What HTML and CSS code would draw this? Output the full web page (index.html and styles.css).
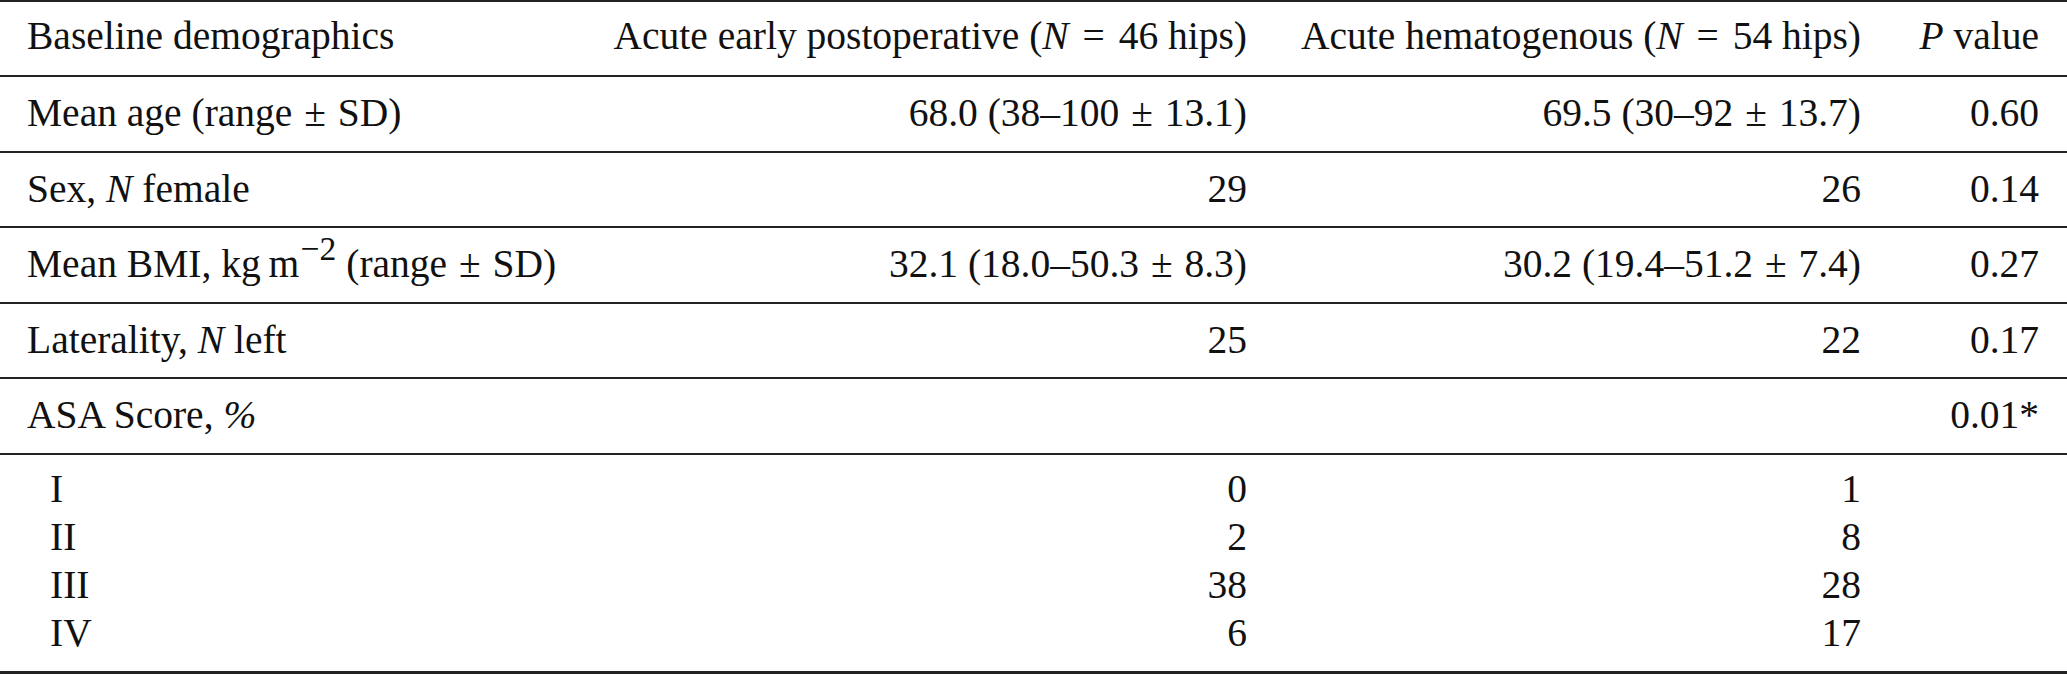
FILE: index.html
```html
<!DOCTYPE html>
<html lang="en">
<head>
<meta charset="utf-8">
<title>Baseline demographics</title>
<link rel="stylesheet" href="styles.css">
</head>
<body>
<table class="demo">
  <colgroup>
    <col class="c1"><col class="c2"><col class="c3"><col class="c4">
  </colgroup>
  <thead>
    <tr class="row head">
      <th class="lbl">Baseline demographics</th>
      <th class="num">Acute early postoperative (<i>N</i> <span class="eq">=</span> 46 hips)</th>
      <th class="num">Acute hematogenous (<i>N</i> <span class="eq">=</span> 54 hips)</th>
      <th class="num last"><i>P</i> value</th>
    </tr>
  </thead>
  <tbody>
    <tr class="row">
      <td class="lbl">Mean age (range&#8201;<span class="pm">±</span>&#8201;SD)</td>
      <td class="num">68.0 (38–100&#8201;<span class="pm">±</span>&#8201;13.1)</td>
      <td class="num">69.5 (30–92&#8201;<span class="pm">±</span>&#8201;13.7)</td>
      <td class="num last">0.60</td>
    </tr>
    <tr class="row">
      <td class="lbl">Sex, <i>N</i> female</td>
      <td class="num">29</td>
      <td class="num">26</td>
      <td class="num last">0.14</td>
    </tr>
    <tr class="row">
      <td class="lbl">Mean BMI, kg&#8201;m<sup class="exp">−2</sup> (range&#8201;<span class="pm">±</span>&#8201;SD)</td>
      <td class="num">32.1 (18.0–50.3&#8201;<span class="pm">±</span>&#8201;8.3)</td>
      <td class="num">30.2 (19.4–51.2&#8201;<span class="pm">±</span>&#8201;7.4)</td>
      <td class="num last">0.27</td>
    </tr>
    <tr class="row">
      <td class="lbl">Laterality, <i>N</i> left</td>
      <td class="num">25</td>
      <td class="num">22</td>
      <td class="num last">0.17</td>
    </tr>
    <tr class="row">
      <td class="lbl">ASA Score, <i>%</i></td>
      <td class="num"></td>
      <td class="num"></td>
      <td class="num last">0.01*</td>
    </tr>
    <tr class="sub first">
      <td class="lbl ind">I</td>
      <td class="num">0</td>
      <td class="num">1</td>
      <td class="num last"></td>
    </tr>
    <tr class="sub">
      <td class="lbl ind">II</td>
      <td class="num">2</td>
      <td class="num">8</td>
      <td class="num last"></td>
    </tr>
    <tr class="sub">
      <td class="lbl ind">III</td>
      <td class="num">38</td>
      <td class="num">28</td>
      <td class="num last"></td>
    </tr>
    <tr class="sub final">
      <td class="lbl ind">IV</td>
      <td class="num">6</td>
      <td class="num">17</td>
      <td class="num last"></td>
    </tr>
  </tbody>
</table>
</body>
</html>
```

FILE: styles.css
```css
html, body {
  margin: 0;
  padding: 0;
  background: #ffffff;
}

.demo {
  width: 2067px;
  border-collapse: collapse;
  table-layout: fixed;
  font-family: "Liberation Serif", "Times New Roman", serif;
  font-size: 39.5px;
  color: #111111;
  border-top: 2px solid #222222;
  border-bottom: 3px solid #222222;
}

.c1 { width: 580px; }
.c2 { width: 693px; }
.c3 { width: 614px; }
.c4 { width: 180px; }

.demo th,
.demo td {
  font-weight: normal;
  white-space: nowrap;
  vertical-align: middle;
  padding: 0 26px 0 0;
  line-height: 1.1;
}

.demo .lbl {
  text-align: left;
  padding-left: 27px;
}

.demo .ind {
  padding-left: 50px;
}

.demo .num {
  text-align: right;
}

.demo .last {
  padding-right: 28px;
}

.demo i {
  font-style: italic;
}

.eq {
  padding: 0 0.1em;
}

.pm {
  padding: 0 0.1em;
}

.exp {
  font-size: 0.85em;
  line-height: 0;
  vertical-align: 0.5em;
  padding-left: 0.04em;
}

.row > th,
.row > td {
  height: 73.5px;
  border-bottom: 2px solid #222222;
}

.head > th {
  height: 70px;
  padding-bottom: 3px;
}

.sub > td {
  height: 48px;
}

.sub.first > td {
  padding-top: 11px;
}

.sub.final > td {
  padding-bottom: 13px;
}
```
